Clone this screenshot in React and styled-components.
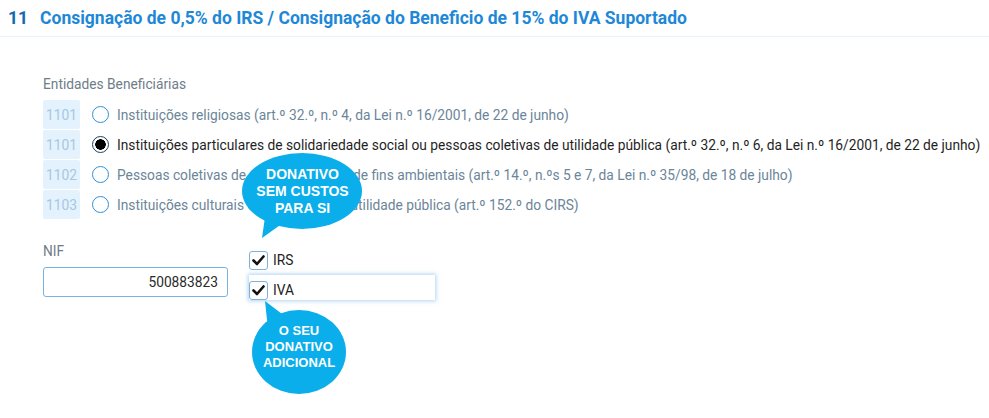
import React from 'react';
import styled, { createGlobalStyle } from 'styled-components';

const GlobalStyle = createGlobalStyle`
  body {
    margin: 0;
    background: #fff;
    font-family: Roboto, "Liberation Sans", Arial, sans-serif;
  }
`;

const entidades = [
  { code: '1101', label: 'Instituições religiosas (art.º 32.º, n.º 4, da Lei n.º 16/2001, de 22 de junho)' },
  { code: '1101', label: 'Instituições particulares de solidariedade social ou pessoas coletivas de utilidade pública (art.º 32.º, n.º 6, da Lei n.º 16/2001, de 22 de junho)', checked: true },
  { code: '1102', label: 'Pessoas coletivas de utilidade pública de fins ambientais (art.º 14.º, n.ºs 5 e 7, da Lei n.º 35/98, de 18 de julho)' },
  { code: '1103', label: 'Instituições culturais com estatuto de utilidade pública (art.º 152.º do CIRS)' },
];

const CheckIcon = () => (
  <svg width="13" height="11" viewBox="0 0 13 11">
    <path d="M1.5 5.5 L5 9 L11.5 1.5" fill="none" stroke="#111" strokeWidth="2.6" strokeLinecap="round" strokeLinejoin="round" />
  </svg>
);

const App = () => (
  <>
    <GlobalStyle />
    <Page>
      <Header>
        <Number>11</Number>
        <Title>Consignação de 0,5% do IRS / Consignação do Beneficio de 15% do IVA Suportado</Title>
      </Header>

      <Content>
        <FieldLabel>Entidades Beneficiárias</FieldLabel>
        <List>
          {entidades.map((e, i) => (
            <Row key={i}>
              <Code>{e.code}</Code>
              <Radio $checked={e.checked} />
              <RowLabel $checked={e.checked}>{e.label}</RowLabel>
            </Row>
          ))}
        </List>

        <BottomGrid>
          <div>
            <FieldLabel>NIF</FieldLabel>
            <NifInput readOnly value="500883823" />
          </div>

          <Checks>
            <Bubble $left={-7} $top={-92} $w={122} $h={90}>
              <svg width="122" height="90" viewBox="0 0 122 90">
                <ellipse cx="60" cy="40" rx="60" ry="38" fill="#0aaeea" />
                <path d="M23 66 L20 87 L41 72 Z" fill="#0aaeea" />
              </svg>
              <BubbleText $left={0} $top={3} $w={121} $h={74} $size={14} $lh={17}>
                DONATIVO<br />SEM CUSTOS<br />PARA SI
              </BubbleText>
            </Bubble>

            <CheckRow>
              <Box><CheckIcon /></Box>
              <CheckLabel>IRS</CheckLabel>
            </CheckRow>
            <FocusRow>
              <Box><CheckIcon /></Box>
              <CheckLabel>IVA</CheckLabel>
            </FocusRow>

            <Bubble $left={3} $top={56} $w={96} $h={98}>
              <svg width="96" height="98" viewBox="0 0 96 98">
                <ellipse cx="47" cy="53" rx="47" ry="42" fill="#0aaeea" />
                <path d="M16 30 L13 2 L34 18 Z" fill="#0aaeea" />
              </svg>
              <BubbleText $left={0} $top={16} $w={94} $h={64} $size={13} $lh={16}>
                O SEU<br />DONATIVO<br />ADICIONAL
              </BubbleText>
            </Bubble>
          </Checks>
        </BottomGrid>
      </Content>
    </Page>
  </>
);

const Page = styled.div`
  width: 989px;
  height: 418px;
  overflow: hidden;
`;

const Header = styled.div`
  display: flex;
  align-items: center;
  gap: 12px;
  height: 36px;
  padding: 0 8px;
  border-bottom: 1px solid #e9f3fb;
`;

const Number = styled.span`
  font-size: 17.5px;
  font-weight: 700;
  color: #1769b0;
`;

const Title = styled.span`
  font-size: 17.5px;
  font-weight: 700;
  color: #1e88d6;
`;

const Content = styled.div`
  padding: 39px 0 0 43px;
`;

const FieldLabel = styled.div`
  font-size: 13.75px;
  line-height: 16px;
  color: #6f7d88;
`;

const List = styled.div`
  display: flex;
  flex-direction: column;
  gap: 1px;
  margin-top: 8px;
`;

const Row = styled.div`
  display: flex;
  align-items: center;
  height: 29px;
`;

const Code = styled.div`
  width: 37px;
  height: 29px;
  display: flex;
  align-items: center;
  justify-content: center;
  background: #e4f2fd;
  border-radius: 2px;
  color: #a4c7e3;
  font-size: 13.75px;
`;

const Radio = styled.span`
  box-sizing: border-box;
  width: 17px;
  height: 17px;
  margin: 0 8px 0 12px;
  border-radius: 50%;
  border: 1.5px solid ${p => (p.$checked ? '#1b3f66' : '#2d90d8')};
  background: ${p => (p.$checked ? 'radial-gradient(circle, #000 0 5px, #fff 5.5px)' : '#fff')};
`;

const RowLabel = styled.span`
  font-size: 13.75px;
  white-space: nowrap;
  color: ${p => (p.$checked ? '#1f1f1f' : '#6b8599')};
`;

const BottomGrid = styled.div`
  display: grid;
  grid-template-columns: 185px 186px;
  column-gap: 21px;
  margin-top: 24px;
`;

const NifInput = styled.input`
  box-sizing: border-box;
  display: block;
  width: 185px;
  height: 30px;
  margin-top: 8px;
  padding: 0 9px;
  border: 1px solid #79b4df;
  border-radius: 3px;
  text-align: right;
  font-family: Roboto, "Liberation Sans", Arial, sans-serif;
  font-size: 13.75px;
  color: #2a2a2a;
  outline: none;
`;

const Checks = styled.div`
  position: relative;
  padding-top: 8px;
`;

const CheckRow = styled.div`
  display: flex;
  align-items: center;
  gap: 5px;
  height: 19px;
`;

const FocusRow = styled(CheckRow)`
  align-items: flex-end;
  height: 25px;
  margin-top: 5px;
  background: #fff;
  box-shadow: 0 0 4px 1px rgba(110, 175, 230, 0.55);
`;

const Box = styled.span`
  box-sizing: border-box;
  width: 19px;
  height: 19px;
  display: flex;
  align-items: center;
  justify-content: center;
  border: 1.5px solid #7db2dd;
  border-radius: 3px;
  background: #fff;
`;

const CheckLabel = styled.span`
  font-size: 13.75px;
  line-height: 19px;
  color: #222;
`;

const Bubble = styled.div`
  position: absolute;
  left: ${p => p.$left}px;
  top: ${p => p.$top}px;
  width: ${p => p.$w}px;
  height: ${p => p.$h}px;
  z-index: 2;

  svg {
    display: block;
  }
`;

const BubbleText = styled.div`
  position: absolute;
  left: ${p => p.$left}px;
  top: ${p => p.$top}px;
  width: ${p => p.$w}px;
  height: ${p => p.$h}px;
  display: flex;
  align-items: center;
  justify-content: center;
  text-align: center;
  font-family: "Liberation Sans", Arial, sans-serif;
  font-weight: 700;
  font-size: ${p => p.$size}px;
  line-height: ${p => p.$lh}px;
  color: #fff;
`;

export default App;
